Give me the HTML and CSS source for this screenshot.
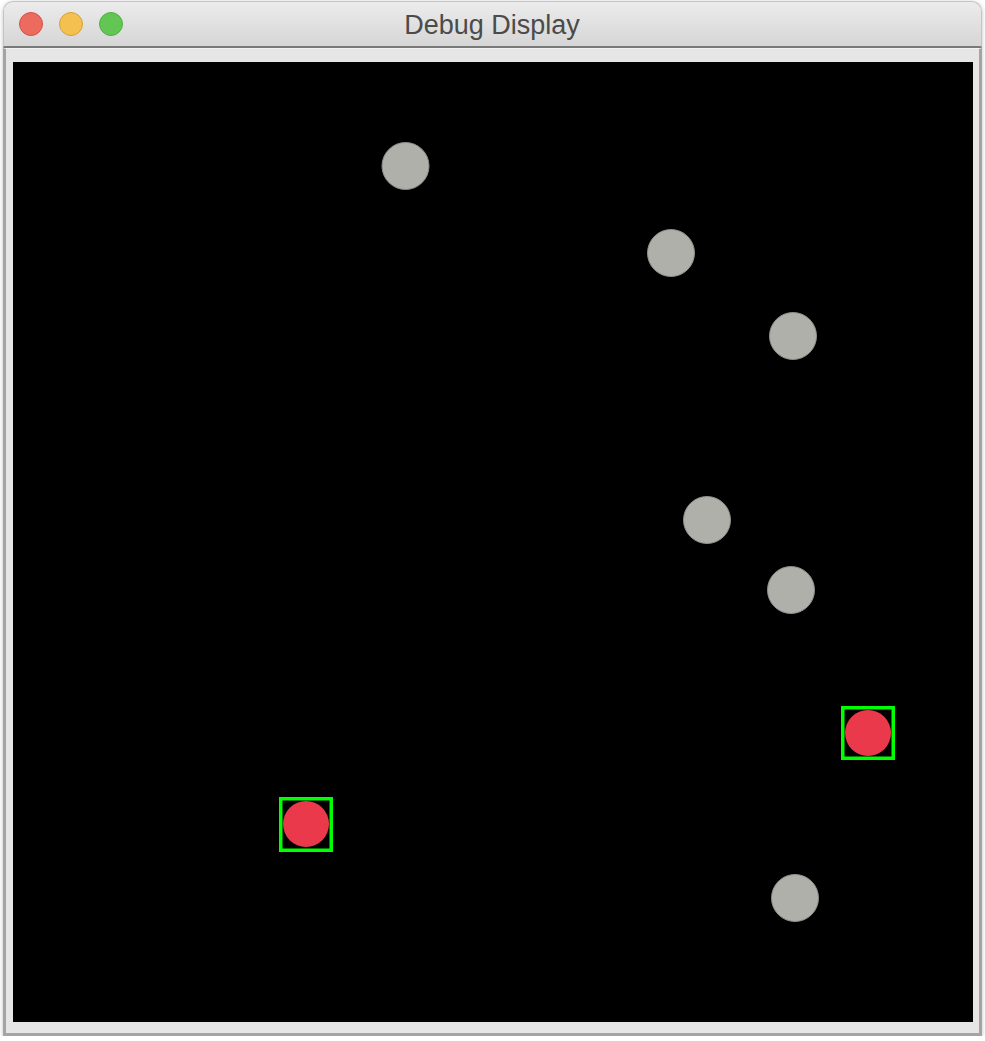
FILE: index.html
```html
<!DOCTYPE html>
<html>
<head>
<meta charset="utf-8">
<title>Debug Display</title>
<link rel="stylesheet" href="styles.css">
</head>
<body>
<div class="window">
  <div class="titlebar">
    <div class="lights">
      <span class="light red"></span>
      <span class="light yellow"></span>
      <span class="light green"></span>
    </div>
    <div class="title">Debug Display</div>
  </div>
  <div class="content">
    <div class="canvas">
      <svg width="960" height="960" viewBox="0 0 960 960" xmlns="http://www.w3.org/2000/svg">
        <g fill="#b0b0ab" stroke="#8e8e8a" stroke-width="1">
          <circle cx="392.5" cy="104" r="23.5"/>
          <circle cx="658" cy="191" r="23.5"/>
          <circle cx="780" cy="274" r="23.5"/>
          <circle cx="694" cy="458" r="23.5"/>
          <circle cx="778" cy="528" r="23.5"/>
          <circle cx="782" cy="836" r="23.5"/>
        </g>
        <g fill="#ea394b">
          <circle cx="293" cy="762" r="23"/>
          <circle cx="855" cy="671" r="23"/>
        </g>
        <g fill="none" stroke="#00ff00" stroke-width="3.5">
          <rect x="267.75" y="736.75" width="50.5" height="51.5"/>
          <rect x="829.75" y="645.75" width="50.5" height="50.5"/>
        </g>
      </svg>
    </div>
  </div>
</div>
</body>
</html>
```

FILE: styles.css
```css
html, body {
  margin: 0;
  padding: 0;
  background: #ffffff;
}

.window {
  margin: 1px 0 0 3px;
  width: 979px;
  border-radius: 10px 10px 0 0;
  box-shadow: 0 1px 4px rgba(0, 0, 0, 0.25);
}

.titlebar {
  position: relative;
  height: 44px;
  display: flex;
  align-items: center;
  justify-content: center;
  background: linear-gradient(#ececec, #d6d6d6);
  border: 1px solid #c4c4c4;
  border-bottom: 2px solid #7a7a7a;
  border-radius: 10px 10px 0 0;
  box-sizing: content-box;
  width: 977px;
}

.lights {
  position: absolute;
  left: 15px;
  top: 10px;
  display: flex;
  gap: 16px;
}

.light {
  width: 22px;
  height: 22px;
  border-radius: 50%;
  border: 1px solid rgba(0, 0, 0, 0.12);
}

.red { background: #ec6a5e; border-color: #d25447; }
.yellow { background: #f4c04f; border-color: #d6a23a; }
.green { background: #62c554; border-color: #55ae46; }

.title {
  font-family: "Liberation Sans", Arial, sans-serif;
  font-size: 27px;
  color: #4b4b4b;
  margin-left: -1px;
  margin-top: 2px;
}

.content {
  background: #e6e6e6;
  border: 3px solid #a4a4a4;
  border-top: 1px solid #f2f2f2;
  padding: 13px 6px 11px 7px;
  width: 960px;
}

.canvas {
  width: 960px;
  height: 960px;
  background: #000000;
}

.canvas svg {
  display: block;
}
```
